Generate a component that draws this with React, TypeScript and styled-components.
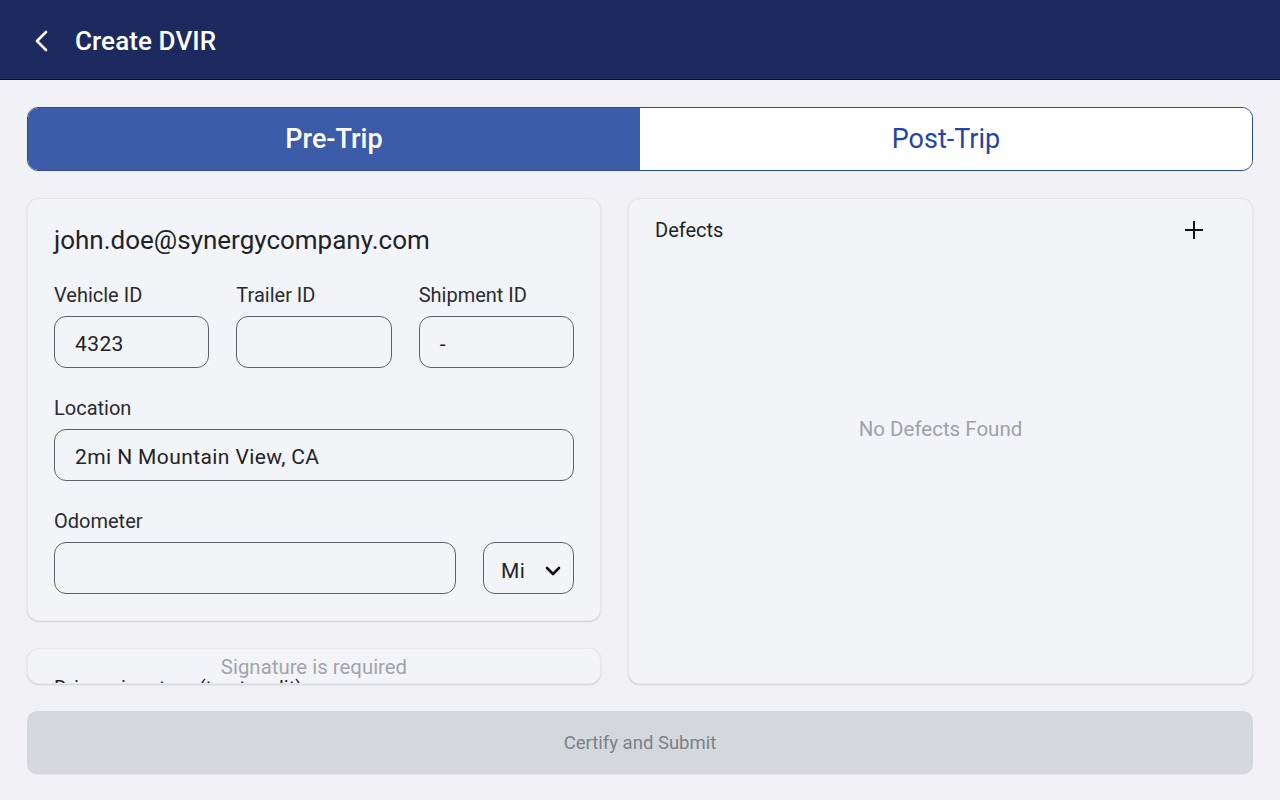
import styled, { createGlobalStyle } from 'styled-components';

const GlobalStyle = createGlobalStyle`
  html, body {
    margin: 0;
    padding: 0;
    background: #f2f2f6;
    font-family: Roboto, "Noto Sans", "Liberation Sans", sans-serif;
  }
  * {
    box-sizing: border-box;
  }
`;

const Page = styled.div`
  width: 1280px;
  height: 800px;
  display: flex;
  flex-direction: column;
  background: #f2f2f6;
  overflow: hidden;
`;

const Header = styled.header`
  height: 80px;
  flex-shrink: 0;
  background: #1c2a5f;
  border-bottom: 1px solid #0b0f1f;
  display: flex;
  align-items: center;
  padding: 3px 0 0 30px;
  gap: 23px;
  color: #ffffff;
`;

const BackButton = styled.button`
  width: 22px;
  height: 30px;
  padding: 0;
  border: none;
  background: transparent;
  display: flex;
  align-items: center;
  justify-content: center;
  cursor: pointer;
`;

const Title = styled.h1`
  margin: 0;
  font-size: 26px;
  font-weight: 500;
  letter-spacing: 0.1px;
`;

const Main = styled.main`
  flex: 1;
  display: flex;
  flex-direction: column;
  padding: 27px;
  gap: 27px;
`;

const Tabs = styled.div`
  height: 64px;
  display: grid;
  grid-template-columns: 1fr 1fr;
  border: 1px solid #2b47a2;
  border-radius: 11px;
  overflow: hidden;
  background: #ffffff;
`;

const Tab = styled.button<{ $active?: boolean }>`
  border: none;
  margin: 0;
  font-family: inherit;
  font-size: 27px;
  font-weight: ${(p) => (p.$active ? 500 : 400)};
  color: ${(p) => (p.$active ? '#ffffff' : '#2443a6')};
  background: ${(p) => (p.$active ? '#3c5ba9' : '#ffffff')};
  cursor: pointer;
`;

const Columns = styled.div`
  flex: 1;
  display: grid;
  grid-template-columns: 574px 1fr;
  gap: 27px;
  min-height: 0;
`;

const LeftColumn = styled.div`
  display: flex;
  flex-direction: column;
  gap: 27px;
  min-height: 0;
`;

const Card = styled.section`
  background: #f3f4f7;
  border: 1px solid #e8e8ec;
  border-radius: 12px;
  box-shadow: 0 1px 2px rgba(0, 0, 0, 0.14);
`;

const FormCard = styled(Card)`
  padding: 27px 26px 26px;
  display: flex;
  flex-direction: column;
  gap: 28px;
`;

const Email = styled.div`
  font-size: 26px;
  line-height: 29px;
  color: #222327;
`;

const Row = styled.div`
  display: flex;
  gap: 27px;
`;

const Field = styled.label<{ $width?: number }>`
  display: flex;
  flex-direction: column;
  gap: 9px;
  flex: ${(p) => (p.$width ? `0 0 ${p.$width}px` : '1 1 0')};
  min-width: 0;
`;

const Label = styled.span`
  font-size: 20px;
  line-height: 24px;
  color: #2a2b30;
  white-space: nowrap;
  height: 24px;
`;

const Input = styled.div`
  height: 52px;
  border: 1px solid #606168;
  border-radius: 12px;
  padding: 3px 20px 0;
  display: flex;
  align-items: center;
  font-size: 21px;
  color: #222327;
  letter-spacing: 0.4px;
`;

const Select = styled(Input)`
  justify-content: space-between;
  padding: 5px 12px 0 17px;
`;

const SignatureCard = styled(Card)`
  height: 36px;
  overflow: hidden;
  flex-shrink: 0;
`;

const SignatureHint = styled.div`
  text-align: center;
  font-size: 20.4px;
  line-height: 24px;
  padding-top: 6px;
  color: #a3a4a8;
`;

const SignatureLabel = styled.div`
  font-size: 20px;
  line-height: 24px;
  margin-top: -3px;
  padding-left: 26px;
  color: #222327;
`;

const DefectsCard = styled(Card)`
  display: flex;
  flex-direction: column;
`;

const DefectsHeader = styled.div`
  display: flex;
  align-items: center;
  justify-content: space-between;
  padding: 0 48px 0 26px;
  height: 62px;
`;

const DefectsTitle = styled.span`
  font-size: 20px;
  color: #222327;
`;

const AddButton = styled.button`
  width: 20px;
  height: 20px;
  padding: 0;
  border: none;
  background: transparent;
  display: flex;
  align-items: center;
  justify-content: center;
  cursor: pointer;
`;

const EmptyState = styled.div`
  flex: 1;
  display: flex;
  align-items: center;
  justify-content: center;
  padding-bottom: 86px;
  font-size: 20.5px;
  color: #a0a1a5;
`;

const SubmitButton = styled.button`
  height: 63px;
  flex-shrink: 0;
  border: none;
  border-radius: 10px;
  background: #d4d7dc;
  color: #7b8286;
  font-family: inherit;
  font-size: 18.5px;
  box-shadow: 0 1px 1px rgba(0, 0, 0, 0.06);
`;

const ChevronLeft = () => (
  <svg width="16" height="24" viewBox="0 0 16 24" fill="none">
    <polyline points="13,3 4,12 13,21" stroke="#ffffff" strokeWidth="2.6" strokeLinecap="round" strokeLinejoin="round" />
  </svg>
);

const ChevronDown = () => (
  <svg width="16" height="12" viewBox="0 0 16 12" fill="none">
    <polyline points="2,3 8,9 14,3" stroke="#111111" strokeWidth="2.6" strokeLinecap="round" strokeLinejoin="round" />
  </svg>
);

const PlusIcon = () => (
  <svg width="20" height="20" viewBox="0 0 20 20" fill="none">
    <path d="M10 1v18M1 10h18" stroke="#111111" strokeWidth="2" />
  </svg>
);

export default function App() {
  return (
    <Page>
      <GlobalStyle />
      <Header>
        <BackButton aria-label="Back">
          <ChevronLeft />
        </BackButton>
        <Title>Create DVIR</Title>
      </Header>
      <Main>
        <Tabs>
          <Tab $active>Pre-Trip</Tab>
          <Tab>Post-Trip</Tab>
        </Tabs>
        <Columns>
          <LeftColumn>
            <FormCard>
              <Email>john.doe@synergycompany.com</Email>
              <Row>
                <Field>
                  <Label>Vehicle ID</Label>
                  <Input>4323</Input>
                </Field>
                <Field>
                  <Label>Trailer ID</Label>
                  <Input />
                </Field>
                <Field>
                  <Label>Shipment ID</Label>
                  <Input>-</Input>
                </Field>
              </Row>
              <Field>
                <Label>Location</Label>
                <Input>2mi N Mountain View, CA</Input>
              </Field>
              <Row>
                <Field>
                  <Label>Odometer</Label>
                  <Input />
                </Field>
                <Field $width={91}>
                  <Label />
                  <Select>
                    Mi
                    <ChevronDown />
                  </Select>
                </Field>
              </Row>
            </FormCard>
            <SignatureCard>
              <SignatureHint>Signature is required</SignatureHint>
              <SignatureLabel>Driver signature (tap to edit)</SignatureLabel>
            </SignatureCard>
          </LeftColumn>
          <DefectsCard>
            <DefectsHeader>
              <DefectsTitle>Defects</DefectsTitle>
              <AddButton aria-label="Add defect">
                <PlusIcon />
              </AddButton>
            </DefectsHeader>
            <EmptyState>No Defects Found</EmptyState>
          </DefectsCard>
        </Columns>
        <SubmitButton disabled>Certify and Submit</SubmitButton>
      </Main>
    </Page>
  );
}
